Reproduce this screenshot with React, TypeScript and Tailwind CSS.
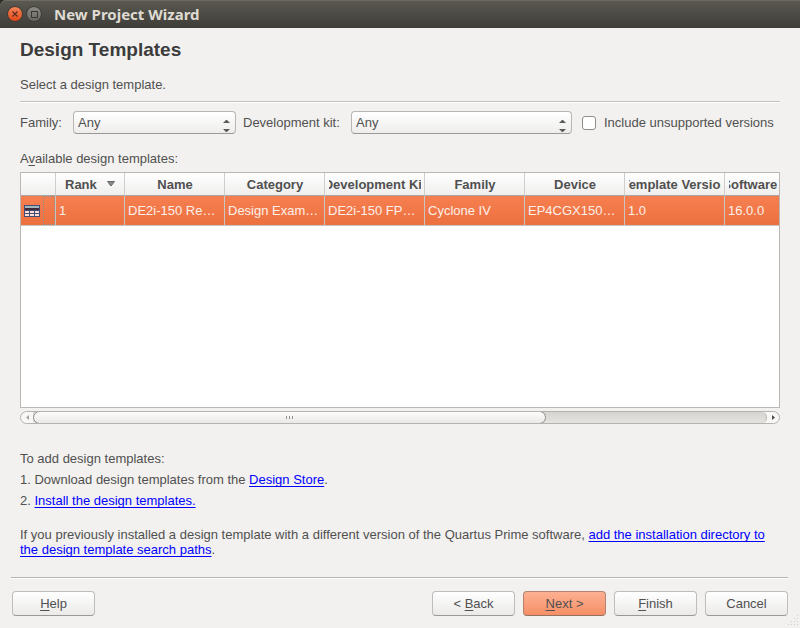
import React, { useState } from "react";

type Column = { title: string; value: string; width: string };

const columns: Column[] = [
  { title: "Name", value: "DE2i-150 Re…", width: "w-[100px]" },
  { title: "Category", value: "Design Exam…", width: "w-[100px]" },
  { title: "Development Kit", value: "DE2i-150 FP…", width: "w-[100px]" },
  { title: "Family", value: "Cyclone IV", width: "w-[100px]" },
  { title: "Device", value: "EP4CGX150…", width: "w-[100px]" },
  { title: "Template Version", value: "1.0", width: "w-[100px]" },
  { title: "Software Version", value: "16.0.0", width: "w-[100px]" },
];

function Mnemonic({ children }: { children: string }) {
  return <span className="underline decoration-1 underline-offset-2">{children}</span>;
}

function TitleBar() {
  return (
    <header className="bg-[#2b2a27]">
      <div className="flex h-7 items-center rounded-tl-md bg-linear-to-b from-[#5b5952] to-[#3e3d38] pl-[7px] shadow-[inset_0_1px_0_#6d6b62]">
        <button type="button" aria-label="Close" className="h-4 w-4">
          <svg viewBox="0 0 16 16" className="block h-4 w-4">
            <defs>
              <linearGradient id="closeFill" x1="0" y1="0" x2="0" y2="1">
                <stop offset="0" stopColor="#f7865c" />
                <stop offset="1" stopColor="#df4816" />
              </linearGradient>
            </defs>
            <circle cx="8" cy="8" r="7.5" fill="url(#closeFill)" stroke="#3b3934" />
            <path d="M5.5 5.5 L10.5 10.5 M10.5 5.5 L5.5 10.5" stroke="#5a2d1c" strokeWidth="1.2" />
          </svg>
        </button>
        <button type="button" aria-label="Maximize" className="ml-[3px] h-4 w-4">
          <svg viewBox="0 0 16 16" className="block h-4 w-4">
            <defs>
              <linearGradient id="maxFill" x1="0" y1="0" x2="0" y2="1">
                <stop offset="0" stopColor="#8d8b84" />
                <stop offset="1" stopColor="#67655f" />
              </linearGradient>
            </defs>
            <circle cx="8" cy="8" r="7.5" fill="url(#maxFill)" stroke="#3b3934" />
            <rect x="5.5" y="5.5" width="6" height="6" fill="none" stroke="#3a3935" />
          </svg>
        </button>
        <span className="ml-3 font-['Noto_Sans',sans-serif] text-[15px] font-bold leading-5 text-[#dfdbd2]">
          New Project Wizard
        </span>
      </div>
    </header>
  );
}

function ComboBox({ id, className }: { id: string; className: string }) {
  return (
    <div className={`relative ${className}`}>
      <select
        id={id}
        className="block h-[23px] w-full appearance-none rounded border border-[#b9b6b2] border-b-[#9b9995] bg-linear-to-b from-white to-[#eeedec] pl-1 pr-4 text-[13px] leading-5"
      >
        <option>Any</option>
      </select>
      <svg
        viewBox="0 0 7 13"
        className="pointer-events-none absolute bottom-[2px] right-[6px] h-[13px] w-[7px]"
        fill="#5c5c5c"
      >
        <path d="M0 4 L3 1 H4 L7 4 Z" />
        <path d="M0 10 L3 13 H4 L7 10 Z" />
      </svg>
    </div>
  );
}

function TemplateIcon() {
  return (
    <svg viewBox="0 0 16 12" className="block h-3 w-4" shapeRendering="crispEdges">
      <rect width="16" height="12" fill="#434e78" />
      <rect x="1" y="1" width="14" height="2" fill="#9fb8c2" />
      <rect x="1" y="3" width="14" height="2" fill="#3d2a38" />
      <g fill="#fbdcd6">
        <rect x="1" y="6" width="4" height="2" />
        <rect x="6" y="6" width="4" height="2" />
        <rect x="11" y="6" width="4" height="2" />
        <rect x="1" y="9" width="4" height="2" />
        <rect x="6" y="9" width="4" height="2" />
        <rect x="11" y="9" width="4" height="2" />
      </g>
    </svg>
  );
}

function TemplateTable() {
  return (
    <div
      className="min-h-[120px] flex-1 overflow-hidden border border-[#bab7b5] bg-white"
      role="region"
      aria-labelledby="templates-label"
    >
      <table className="w-[804px] table-fixed border-separate border-spacing-0">
        <thead>
          <tr className="h-[23px] bg-linear-to-b from-white to-[#efeeed]">
            <th aria-label="Icon" className="w-[35px] border-b border-r border-b-[#a9a7a5] border-r-[#d0cecc] p-0" />
            <th className="w-[69px] border-b border-r border-b-[#a9a7a5] border-r-[#d0cecc] p-0">
              <div className="flex items-center pl-[9px]">
                Rank
                <svg viewBox="0 0 8 6" className="ml-[10px] h-[6px] w-2" fill="#8a8a8a" stroke="#666666">
                  <path d="M0.5 0.5 H7.5 L4 5 Z" />
                </svg>
              </div>
            </th>
            {columns.map((c) => (
              <th key={c.title} className={`${c.width} border-b border-r border-b-[#a9a7a5] border-r-[#d0cecc] py-0 pl-1 pr-[3px]`}>
                <div className="flex justify-center overflow-hidden whitespace-nowrap">{c.title}</div>
              </th>
            ))}
          </tr>
        </thead>
        <tbody>
          <tr className="h-[30px] bg-linear-to-b from-[#f67f50] to-[#ec703e] text-[#fdf0ea]">
            <td className="border-b border-r border-[#c8c5c3] p-0">
              <div className="flex h-[29px] items-center pl-[3px]">
                <TemplateIcon />
                <span className="ml-[3px] h-full flex-1 border border-dotted border-[#8f8f88]" />
              </div>
            </td>
            <td className="border-b border-r border-[#c8c5c3] px-[3px] py-0">1</td>
            {columns.map((c) => (
              <td key={c.title} className="truncate border-b border-r border-[#c8c5c3] px-[3px] py-0">
                {c.value}
              </td>
            ))}
          </tr>
        </tbody>
      </table>
    </div>
  );
}

function ScrollBar() {
  return (
    <div className="mt-[3px] flex h-[13px] overflow-hidden rounded-full border border-[#b5b3b0] bg-[#f8f7f6]">
      <button type="button" aria-label="Scroll left" className="flex w-3 items-center justify-center">
        <svg viewBox="0 0 3 5" className="h-[5px] w-[3px]" fill="#a5a3a0">
          <path d="M3 0 V5 L0 2.5 Z" />
        </svg>
      </button>
      <div className="flex flex-1 rounded-r-full border-r border-[#b5b3b0] bg-linear-to-b from-[#d5d4d0] to-[#e4e3e1]">
        <div className="-my-px flex w-[70%] items-center justify-center gap-[2px] rounded-full border border-[#8f8d8a] bg-linear-to-b from-[#fdfdfd] to-[#e9e8e6]">
          <span className="h-[3px] w-px bg-[#959390]" />
          <span className="h-[3px] w-px bg-[#959390]" />
          <span className="h-[3px] w-px bg-[#959390]" />
        </div>
      </div>
      <button type="button" aria-label="Scroll right" className="flex w-3 items-center justify-center">
        <svg viewBox="0 0 3 5" className="h-[5px] w-[3px]" fill="#4c4c4c">
          <path d="M0 0 V5 L3 2.5 Z" />
        </svg>
      </button>
    </div>
  );
}

function DocLink({ children }: { children: React.ReactNode }) {
  return (
    <a href="#" className="text-[#0000ff] underline decoration-1 underline-offset-2 [text-decoration-skip-ink:none]">
      {children}
    </a>
  );
}

function WizardButton({ children, primary = false }: { children: React.ReactNode; primary?: boolean }) {
  const look = primary
    ? "border-[#b48270] border-b-[#94705f] from-[#fdb092] to-[#f58f66]"
    : "border-[#bfbcb9] border-b-[#9b9995] from-white to-[#ebeae9]";
  return (
    <button type="button" className={`h-[25px] w-[83px] rounded border bg-linear-to-b ${look}`}>
      {children}
    </button>
  );
}

export default function App() {
  const [unsupported, setUnsupported] = useState(false);
  return (
    <div className="flex min-h-screen flex-col bg-[#f2f1ef] font-['Liberation_Sans',Arial,sans-serif] text-[13px] leading-[15px] text-[#505050]">
      <TitleBar />
      <main className="flex flex-1 flex-col px-5 pt-[10px]">
        <h1 className="text-[19px] font-bold leading-6 text-[#3c3c3c]">Design Templates</h1>
        <p className="mt-[15px]">Select a design template.</p>
        <hr className="mt-[9px] h-[2px] border-0 border-b border-t border-b-white border-t-[#c3c0bd]" />
        <div className="mt-2 flex items-center">
          <label htmlFor="family" className="w-[53px]">Family:</label>
          <ComboBox id="family" className="w-[163px]" />
          <label htmlFor="kit" className="ml-[7px] w-[108px]">Development kit:</label>
          <ComboBox id="kit" className="flex-1" />
          <label className="ml-[10px] flex w-[198px] items-center gap-2 whitespace-nowrap">
            <input
              type="checkbox"
              checked={unsupported}
              onChange={(e) => setUnsupported(e.target.checked)}
              className="h-[14px] w-[14px] appearance-none rounded-[3px] border border-[#8f8d8a] bg-white checked:bg-[#f07746]"
            />
            Include unsupported versions
          </label>
        </div>
        <div id="templates-label" className="mb-[6px] mt-[17px]">
          A<Mnemonic>v</Mnemonic>ailable design templates:
        </div>
        <TemplateTable />
        <ScrollBar />
        <section className="mt-[27px] leading-[21px]">
          <p className="leading-[15px]">To add design templates:</p>
          <ol className="mt-[3px]">
            <li>1. Download design templates from the <DocLink>Design Store</DocLink>.</li>
            <li>2. <DocLink>Install the design templates.</DocLink></li>
          </ol>
        </section>
        <p className="mt-4">
          If you previously installed a design template with a different version of the Quartus Prime software,{" "}
          <DocLink>add the installation directory to the design template search paths</DocLink>.
        </p>
      </main>
      <footer className="mt-5 px-3">
        <hr className="-ml-px h-[2px] border-0 border-b border-t border-b-white border-t-[#b5b3b0]" />
        <div className="flex gap-2 pb-3 pt-3">
          <WizardButton><Mnemonic>H</Mnemonic>elp</WizardButton>
          <span className="flex-1" />
          <WizardButton>&lt; <Mnemonic>B</Mnemonic>ack</WizardButton>
          <WizardButton primary><Mnemonic>N</Mnemonic>ext &gt;</WizardButton>
          <WizardButton><Mnemonic>F</Mnemonic>inish</WizardButton>
          <WizardButton>Cancel</WizardButton>
        </div>
      </footer>
      <svg viewBox="0 0 11 11" className="pointer-events-none fixed bottom-[2px] right-[1px] h-[11px] w-[11px]" fill="#d2d0ce">
        {[0, 1, 2, 3].map((r) =>
          [0, 1, 2, 3].filter((c) => c + r >= 3).map((c) => (
            <rect key={`${r}-${c}`} x={c * 3} y={r * 3} width="1" height="1" />
          ))
        )}
      </svg>
    </div>
  );
}
